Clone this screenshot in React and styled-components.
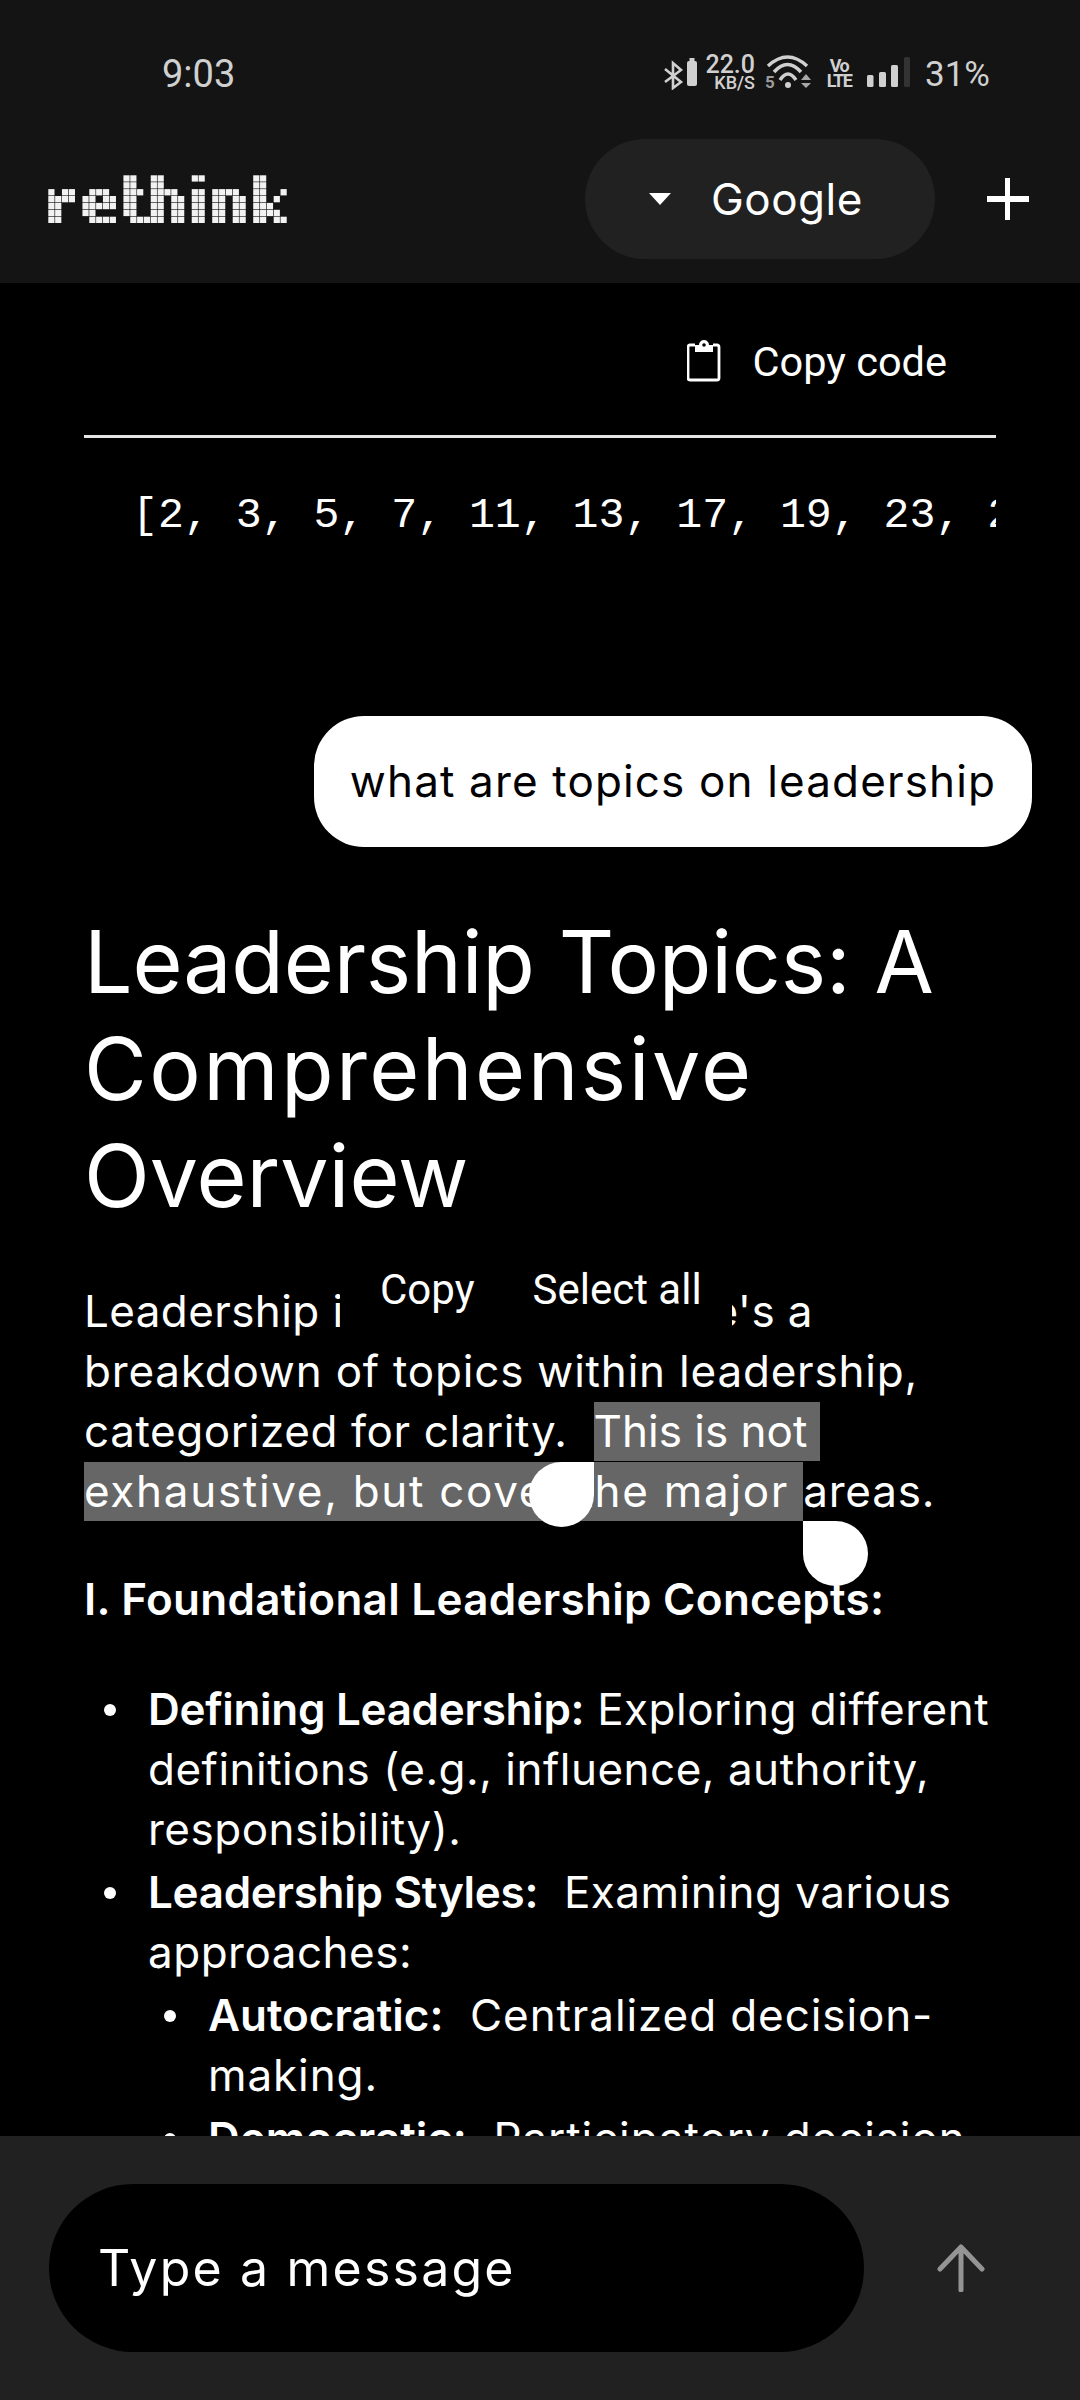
import styled, { createGlobalStyle } from 'styled-components'

const GlobalStyle = createGlobalStyle`
  html, body {
    margin: 0;
    padding: 0;
    background: #000;
  }
  * { box-sizing: border-box; }
`

const logoRows = [
  [11, 12, 15, 16, 21, 22, 30, 31],
  [11, 12, 15, 16, 30, 31],
  [0, 2, 3, 6, 7, 8, 11, 12, 13, 15, 16, 17, 18, 21, 22, 24, 25, 26, 27, 30, 31, 34],
  [0, 1, 2, 3, 5, 6, 8, 9, 11, 12, 15, 16, 18, 19, 21, 22, 24, 25, 27, 28, 30, 31, 33],
  [0, 1, 5, 6, 7, 8, 9, 11, 12, 15, 16, 18, 19, 21, 22, 24, 25, 27, 28, 30, 31, 32],
  [0, 1, 5, 6, 11, 12, 15, 16, 18, 19, 21, 22, 24, 25, 27, 28, 30, 31, 32, 33],
  [0, 1, 6, 7, 8, 9, 12, 13, 14, 15, 16, 18, 19, 21, 22, 24, 25, 27, 28, 30, 31, 33, 34],
]

const Logo = () => (
  <svg width="240" height="49" viewBox="0 0 240 49">
    {logoRows.map((cols, y) =>
      cols.map((x) => (
        <rect key={`${x}-${y}`} x={x * 6.83 + 0.3} y={y * 6.9 + 0.3} width="6.2" height="6.3" fill="#f2f2f2" />
      ))
    )}
  </svg>
)

const App = () => {
  return (
    <Screen>
      <GlobalStyle />
      <TopArea>
        <StatusBar>
          <Clock>9:03</Clock>
          <StatusIcons>
            <svg width="34" height="34" viewBox="0 0 34 34">
              <path d="M2 13 L18 26 L10 32 V7 L18 14 L2 26" fill="none" stroke="#d0d0d0" strokeWidth="2.6" />
              <rect x="24" y="5" width="10" height="25" rx="2" fill="#d0d0d0" />
              <rect x="26.5" y="2" width="5" height="3" fill="#d0d0d0" />
            </svg>
            <Speed>
              <SpeedValue>22.0</SpeedValue>
              <SpeedUnit>KB/S</SpeedUnit>
            </Speed>
            <WifiIcon width="48" height="36" viewBox="0 0 48 36">
              <text x="0" y="34" fontFamily="Roboto, sans-serif" fontSize="17" fontWeight="700" fill="#9c9c9c">5</text>
              <path d="M3 12 Q22.5 -6 42 12" fill="none" stroke="#d0d0d0" strokeWidth="3.5" />
              <path d="M9 18 Q22.5 3 36 18" fill="none" stroke="#d0d0d0" strokeWidth="3.5" />
              <path d="M15 26 Q23 14 31 26" fill="none" stroke="#d0d0d0" strokeWidth="3.5" />
              <circle cx="23" cy="31" r="3" fill="#d0d0d0" />
              <path d="M36 26 L41 20 L46 26 Z" fill="#a8a8a8" />
              <path d="M36 29 L46 29 L41 34 Z" fill="#a8a8a8" />
            </WifiIcon>
            <VoLte>
              <span>Vo</span>
              <span>LTE</span>
            </VoLte>
            <SignalIcon width="44" height="31" viewBox="0 0 44 31">
              <rect x="0" y="19" width="6.5" height="12" rx="1.5" fill="#d0d0d0" />
              <rect x="12" y="16" width="7" height="15" rx="1.5" fill="#d0d0d0" />
              <rect x="24" y="9" width="7" height="22" rx="1.5" fill="#d0d0d0" />
              <rect x="37" y="1" width="6" height="30" rx="1.5" fill="#333" />
            </SignalIcon>
            <Battery>31%</Battery>
          </StatusIcons>
        </StatusBar>
        <AppBar>
          <Logo />
          <AppActions>
            <ModelPill>
              <Caret />
              <ModelName>Google</ModelName>
            </ModelPill>
            <svg width="42" height="42" viewBox="0 0 42 42">
              <rect x="18" y="0" width="5" height="42" fill="#fff" />
              <rect x="0" y="18" width="42" height="6" fill="#fff" />
            </svg>
          </AppActions>
        </AppBar>
      </TopArea>

      <Chat>
        <CopyRow>
          <svg width="34" height="42" viewBox="0 0 34 42">
            <path d="M8 5 H3 a2 2 0 0 0 -2 2 V38 a2 2 0 0 0 2 2 H30 a2 2 0 0 0 2 -2 V7 a2 2 0 0 0 -2 -2 H26" fill="none" stroke="#fff" strokeWidth="2.8" />
            <path d="M8 5 H12 a5 5 0 0 1 10 0 H26 V12 H8 Z" fill="#fff" />
            <circle cx="17" cy="5" r="1.8" fill="#000" />
          </svg>
          <CopyLabel>Copy code</CopyLabel>
        </CopyRow>
        <Rule />
        <CodeLine>[2, 3, 5, 7, 11, 13, 17, 19, 23, 29]</CodeLine>

        <UserRow>
          <UserBubble>what are topics on leadership</UserBubble>
        </UserRow>

        <Title>
          <TitleLine $spacing={-0.2}>Leadership Topics: A</TitleLine>
          <TitleLine $spacing={2.4}>Comprehensive</TitleLine>
          <TitleLine>Overview</TitleLine>
        </Title>

        <Paragraph>
          <ParagraphLine $spacing={0.4}>Leadership is a vast field. Here's a</ParagraphLine>
          <ParagraphLine $spacing={0.8}>breakdown of topics within leadership,</ParagraphLine>
          <ParagraphLine $spacing={0.6}>
            categorized for clarity.{'\u00a0 '}
            <Selected $spacing={0}>
              This is not{'\u00a0'}
              <StartHandle />
            </Selected>
          </ParagraphLine>
          <ParagraphLine $spacing={0.8}>
            <Selected $spacing={1.7}>
              exhaustive, but cover the major{'\u00a0'}
              <EndHandle />
            </Selected>
            areas.
          </ParagraphLine>
          <SelectionMenu>
            <MenuItem>Copy</MenuItem>
            <MenuItem>Select all</MenuItem>
          </SelectionMenu>
        </Paragraph>

        <SectionHeading>I. Foundational Leadership Concepts:</SectionHeading>

        <TopicList>
          <Topic>
            <b>Defining Leadership:</b> Exploring different<br />
            definitions (e.g., influence, authority,<br />
            responsibility).
          </Topic>
          <Topic>
            <b>Leadership Styles:</b>{'\u00a0 '}Examining various<br />
            approaches:
            <SubList>
              <Topic>
                <b>Autocratic:</b>{'\u00a0 '}Centralized decision-<br />
                making.
              </Topic>
              <Topic>
                <b>Democratic:</b>{'\u00a0 '}Participatory decision-<br />
                making.
              </Topic>
            </SubList>
          </Topic>
        </TopicList>
      </Chat>

      <Composer>
        <MessageInput>Type a message</MessageInput>
        <svg width="48" height="48" viewBox="0 0 48 48">
          <path d="M24 46 V3 M3 25 L24 3 L45 25" fill="none" stroke="#949494" strokeWidth="5" strokeLinecap="round" strokeLinejoin="round" />
        </svg>
      </Composer>
    </Screen>
  )
}

export default App

const Screen = styled.div`
  width: 1080px;
  height: 2400px;
  display: flex;
  flex-direction: column;
  overflow: hidden;
  background: #000;
  color: #fff;
  font-family: Inter, "Liberation Sans", sans-serif;
`

const TopArea = styled.header`
  height: 283px;
  flex: none;
  background: #141414;
`

const StatusBar = styled.div`
  height: 139px;
  display: flex;
  align-items: flex-start;
  justify-content: space-between;
  padding: 54px 90px 0 162px;
  color: #d0d0d0;
  font-family: Roboto, sans-serif;
`

const Clock = styled.div`
  font-size: 38px;
  line-height: 40px;
`

const StatusIcons = styled.div`
  display: flex;
  align-items: flex-end;
  height: 36px;
`

const Speed = styled.div`
  width: 48px;
  margin-left: 10px;
  display: flex;
  flex-direction: column;
  align-items: flex-end;
  font-weight: 500;
`

const SpeedValue = styled.span`
  font-size: 25px;
  line-height: 22px;
`

const SpeedUnit = styled.span`
  font-size: 18px;
  line-height: 14px;
`

const WifiIcon = styled.svg`
  margin-left: 10px;
`

const VoLte = styled.div`
  width: 22px;
  display: flex;
  flex-direction: column;
  align-items: center;
  margin-left: 15px;
  margin-bottom: 2px;
  font-size: 18px;
  line-height: 15px;
  font-weight: 700;
  letter-spacing: -1.5px;
`

const SignalIcon = styled.svg`
  margin-left: 17px;
  margin-bottom: 3px;
`

const Battery = styled.div`
  font-size: 35px;
  line-height: 36px;
  margin-left: 14px;
  margin-bottom: -3px;
`

const AppBar = styled.div`
  height: 120px;
  display: flex;
  align-items: center;
  justify-content: space-between;
  padding: 0 51px 0 48px;
`

const AppActions = styled.div`
  display: flex;
  align-items: center;
  gap: 52px;
`

const ModelPill = styled.div`
  width: 350px;
  height: 120px;
  border-radius: 60px;
  background: #212121;
  display: flex;
  align-items: center;
  padding-left: 64px;
`

const Caret = styled.span`
  width: 0;
  height: 0;
  border-left: 11px solid transparent;
  border-right: 11px solid transparent;
  border-top: 12px solid #fff;
`

const ModelName = styled.span`
  margin-left: 40px;
  font-size: 44px;
  letter-spacing: 0.5px;
  color: #fff;
`

const Chat = styled.main`
  flex: 1;
  min-height: 0;
  overflow: hidden;
  padding: 53px 48px 0 84px;
`

const CopyRow = styled.div`
  display: flex;
  align-items: center;
  justify-content: flex-end;
  gap: 32px;
  padding-right: 85px;
  height: 50px;
`

const CopyLabel = styled.span`
  font-family: Roboto, sans-serif;
  font-size: 41.5px;
`

const Rule = styled.div`
  width: 912px;
  height: 3px;
  margin-top: 49px;
  background: #e6e6e6;
`

const CodeLine = styled.pre`
  width: 912px;
  height: 60px;
  margin: 48px 0 0;
  padding-left: 48px;
  overflow: hidden;
  font-family: "Liberation Mono", monospace;
  font-size: 43.2px;
  line-height: 60px;
`

const UserRow = styled.div`
  display: flex;
  justify-content: flex-end;
  margin-top: 170px;
`

const UserBubble = styled.div`
  width: 718px;
  height: 131px;
  border-radius: 50px;
  background: #fff;
  color: #000;
  display: flex;
  align-items: center;
  justify-content: center;
  padding-bottom: 2px;
  font-size: 44px;
  letter-spacing: 1.15px;
  white-space: nowrap;
`

const Title = styled.h1`
  margin: 62px 0 0;
  font-size: 86px;
  line-height: 107px;
  font-weight: 400;
  white-space: nowrap;
`

const TitleLine = styled.span`
  display: block;
  letter-spacing: ${({ $spacing }) => $spacing || 0}px;
`

const Paragraph = styled.div`
  position: relative;
  margin: 51px 0 0;
  font-size: 44px;
  line-height: 60px;
  white-space: nowrap;
`

const ParagraphLine = styled.div`
  height: 60px;
  letter-spacing: ${({ $spacing }) => $spacing || 0}px;
`

const Selected = styled.span`
  position: relative;
  display: inline-block;
  height: 59px;
  vertical-align: top;
  margin-top: 1px;
  line-height: 58px;
  background: #666;
  letter-spacing: ${({ $spacing }) => $spacing}px;
`

const Handle = styled.span`
  position: absolute;
  z-index: 1;
  width: 65px;
  height: 65px;
  background: #fff;
`

const StartHandle = styled(Handle)`
  top: 60px;
  left: -65px;
  border-radius: 50% 0 50% 50%;
`

const EndHandle = styled(Handle)`
  top: 59px;
  right: -65px;
  border-radius: 0 50% 50% 50%;
`

const SelectionMenu = styled.div`
  position: absolute;
  top: -41px;
  left: 256px;
  width: 392px;
  height: 99px;
  background: #000;
  display: flex;
  align-items: center;
  gap: 58px;
  padding-left: 40px;
`

const MenuItem = styled.span`
  font-family: Roboto, sans-serif;
  font-size: 42px;
`

const SectionHeading = styled.h2`
  margin: 48px 0 0;
  font-size: 44px;
  line-height: 60px;
  font-weight: 600;
  letter-spacing: 0.28px;
  white-space: nowrap;
`

const TopicList = styled.ul`
  margin: 50px 0 0;
  padding: 0 0 0 64px;
  list-style: none;
  font-size: 44px;
  line-height: 60px;
  letter-spacing: 0.5px;
  white-space: nowrap;

  b {
    font-weight: 600;
    letter-spacing: -0.3px;
  }
`

const SubList = styled.ul`
  margin: 3px 0 0;
  padding-left: 60px;
  list-style: none;
  letter-spacing: 0.9px;

  b {
    letter-spacing: 0;
  }
`

const Topic = styled.li`
  position: relative;
  margin-bottom: 3px;

  &::before {
    content: "";
    position: absolute;
    left: -44px;
    top: 25px;
    width: 12px;
    height: 12px;
    border-radius: 50%;
    background: #fff;
  }
`

const Composer = styled.footer`
  height: 264px;
  flex: none;
  background: #212121;
  position: relative;
  display: flex;
  align-items: center;
  gap: 73px;
  padding: 0 0 0 49px;
`

const MessageInput = styled.div`
  width: 815px;
  height: 168px;
  border-radius: 84px;
  background: #000;
  display: flex;
  align-items: center;
  padding-left: 49px;
  font-size: 50px;
  letter-spacing: 2.2px;
`
